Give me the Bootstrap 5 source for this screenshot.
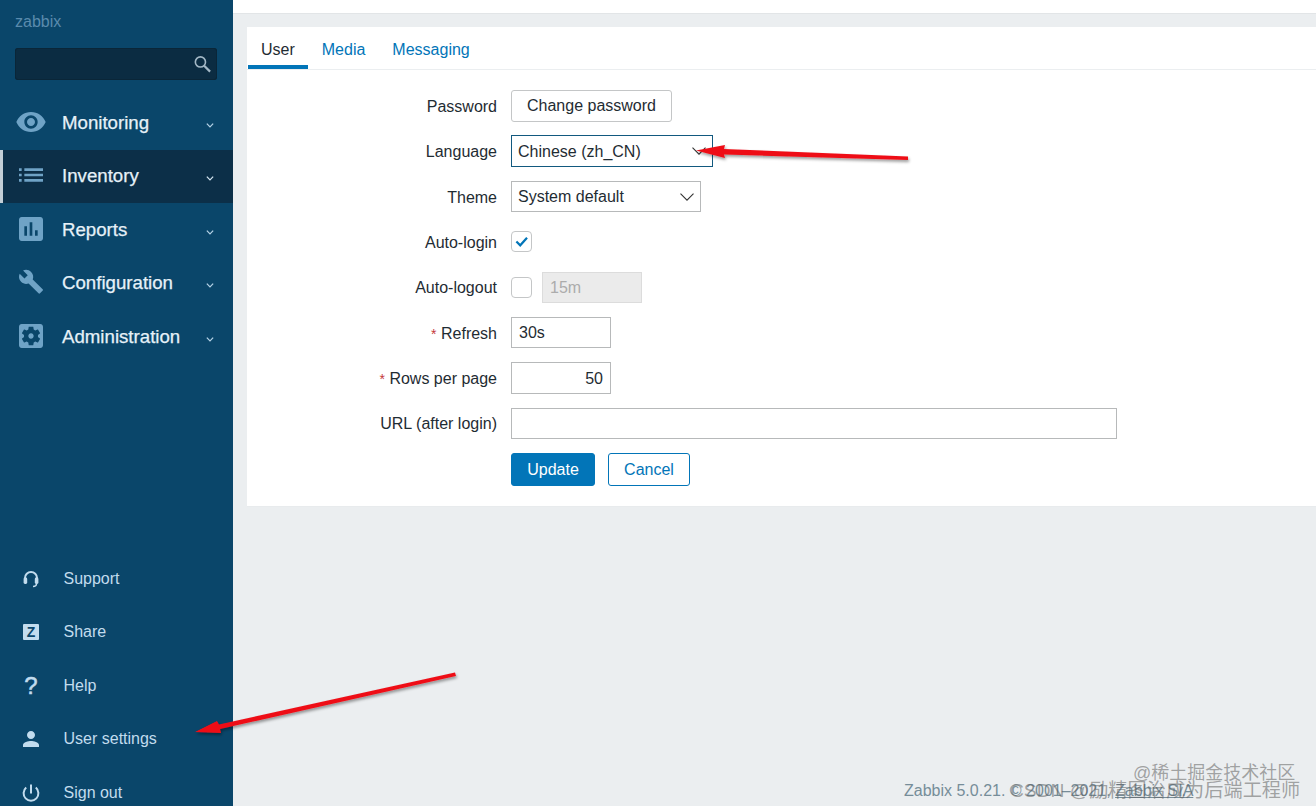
<!DOCTYPE html>
<html lang="en">
<head>
    <meta charset="UTF-8">
    <title>User settings</title>
    <link href="https://cdn.jsdelivr.net/npm/bootstrap@5.3.0/dist/css/bootstrap.min.css" rel="stylesheet">
    <style>
        html, body { height: 100%; }
        body {
            font-family: "Liberation Sans", Arial, sans-serif;
            font-size: 16px;
            color: #1f2c33;
            background: #ebeef0;
            overflow: hidden;
        }
        .shell { height: 806px; width: 1316px; }

        /* sidebar */
        .side {
            width: 233px;
            flex: 0 0 233px;
            height: 806px;
            background: #0a466a;
            overflow: hidden;
        }
        .brand { padding: 13px 15px 0; height: 48px; color: #5a8bad; line-height: 18px; }
        .search-box {
            margin: 0 16px 0 15px;
            height: 32px;
            background: #0b2c42;
            border-radius: 3px;
            box-shadow: inset 0 0 0 1px #0a2638;
        }
        .search-box input {
            background: transparent;
            border: 0;
            outline: 0;
            min-width: 0;
            color: #fff;
        }
        .search-box svg { margin-right: 6px; }
        .menu-main { margin-top: 16px; }
        .menu-link {
            height: 53.5px;
            padding: 0 0 0 15px;
            gap: 15px;
            font-size: 18.67px;
            color: #e6f1f8;
            -webkit-text-stroke: .25px #e6f1f8;
        }
        .menu-link:hover, .menu-link:focus { color: #fff; }
        .menu-link svg.ico { width: 32px; height: 32px; fill: #6fa3c6; flex: 0 0 32px; margin-top: -2px; }
        .menu-link.current {
            background: #0c2f48;
            box-shadow: inset 3px 0 0 #c3ced6;
        }
        .menu-link .caret-mark { margin-left: auto; margin-right: 19px; margin-top: 5px; }
        .menu-foot { margin-top: auto; margin-bottom: -13.5px; }
        .foot-link {
            height: 53.5px;
            padding: 0 0 0 19px;
            gap: 20.5px;
            color: #c2dcee;
        }
        .foot-link:hover, .foot-link:focus { color: #fff; }
        .foot-icon {
            width: 24px;
            height: 24px;
            flex: 0 0 24px;
            color: #c2dcee;
            font-weight: 700;
        }
        .foot-icon svg { width: 24px; height: 24px; }
        .z-box {
            width: 16px;
            height: 16px;
            background: #c2dcee;
            color: #0a466a;
            font-size: 14px;
            line-height: 16px;
            border-radius: 1px;
        }
        .help-mark { font-size: 24px; font-weight: 400; line-height: 24px; -webkit-text-stroke: .5px #c2dcee; }

        /* content */
        .top-strip { height: 14px; background: #fff; border-bottom: 1px solid #e2e5e7; }
        .panel {
            margin: 13px 0 0 14px;
            height: 480px;
            background: #fff;
            border-bottom: 1px solid #e8ebed;
        }
        .tab-row { height: 43px; border-bottom: 1px solid #ebeef0; padding-left: 1px; }
        .tab-row .nav-link {
            height: 42px;
            padding: 13px 13px 0;
            color: #0275b8;
            line-height: 19px;
        }
        .tab-row .tab-gap { margin-left: 1px; }
        .tab-row .nav-link.active {
            color: #1f2c33;
            box-shadow: inset 0 -4px 0 #0275b8;
        }
        .form-area {
            display: grid;
            grid-template-columns: 250px 1fr;
            column-gap: 14px;
            row-gap: 13.9px;
            grid-auto-rows: 31.5px;
            padding-top: 20px;
        }
        .field-label { text-align: right; align-self: center; margin: 0; padding-top: 2px; }
        .req { color: #c4383a; font-size: 14px; }
        .ctl, .ctl:focus {
            border: 1px solid #b7b9ba;
            border-radius: 0;
            height: 31.5px;
            min-height: 0;
            padding: 1px 7px 0;
            font-size: 16px;
            color: #1f2c33;
            box-shadow: none;
        }
        .ctl-100 { width: 100px; }
        .ctl-606 { width: 606px; }
        .ctl.ctl-off { width: 100px; margin-left: 2px; background: #ebebeb; color: #acacac; border-color: #dcdcdc; opacity: 1; }
        .pick {
            padding: 1px 30px 0 6px;
            background-position: right 6px center;
            background-size: 14px 8px;
            background-image: url("data:image/svg+xml,%3csvg xmlns='http://www.w3.org/2000/svg' viewBox='0 0 14 8'%3e%3cpath fill='none' stroke='%23333' stroke-width='1.1' d='M.5.7 7 7.2 13.5.7'/%3e%3c/svg%3e");
        }
        .pick-lang, .pick-lang:focus { width: 202px; border-color: #12597f; }
        .pick-theme { width: 190px; }
        .tick {
            width: 21px;
            height: 21px;
            margin: 0;
            border: 1px solid #c4c6c7;
            border-radius: 3px;
            background-size: 17px;
        }
        .tick:checked, .tick:checked:focus {
            background-color: #fff;
            border-color: #c4c6c7;
            box-shadow: none;
            background-image: url("data:image/svg+xml,%3csvg xmlns='http://www.w3.org/2000/svg' viewBox='0 0 20 20'%3e%3cpath fill='none' stroke='%230275b8' stroke-width='2.6' d='M4 10l4.5 4.5L16.5 5.5'/%3e%3c/svg%3e");
        }
        .btn-plain {
            --bs-btn-padding-x: 15px;
            --bs-btn-padding-y: 0;
            --bs-btn-font-size: 16px;
            --bs-btn-border-radius: 3px;
            --bs-btn-color: #1f2c33;
            --bs-btn-border-color: #c4c6c7;
            --bs-btn-hover-border-color: #c4c6c7;
            height: 32px;
            width: 161px;
        }
        .btn-update, .btn-cancel {
            --bs-btn-padding-x: 0;
            --bs-btn-padding-y: 0;
            --bs-btn-font-size: 16px;
            --bs-btn-border-radius: 3px;
            height: 33px;
        }
        .btn-update {
            --bs-btn-bg: #0275b8;
            --bs-btn-border-color: #0275b8;
            --bs-btn-color: #fff;
            width: 84px;
        }
        .btn-cancel {
            --bs-btn-border-color: #0275b8;
            --bs-btn-color: #0275b8;
            width: 82px;
        }
        .actions-cell { gap: 13px; }
        .page-foot {
            margin-top: auto;
            padding: 0 0 6px 671px;
            color: #768d99;
            line-height: 18px;
        }
        .page-foot a { color: #768d99; }

        /* things lying over the page */
        .arrows { position: absolute; left: 0; top: 0; pointer-events: none; }
        .mark-a, .mark-b {
            position: absolute;
            color: rgba(95, 95, 95, .55);
            white-space: nowrap;
            font-family: "Liberation Sans", "Noto Sans CJK SC", sans-serif;
            line-height: 20px;
        }
        .mark-a { left: 1010px; top: 781px; font-size: 19.2px; }
        .mark-b { left: 1133px; top: 763px; font-size: 18px; }
    </style>
</head>
<body>
<div class="shell d-flex position-relative">
    <!-- left menu -->
    <aside class="side d-flex flex-column">
        <div class="brand">zabbix</div>
        <div class="search-box d-flex align-items-center">
            <input type="text" class="flex-grow-1" aria-label="Search">
            <svg width="20" height="20" viewBox="0 0 20 20" fill="none" stroke="#a3b8c6" stroke-width="1.9"><circle cx="7.6" cy="7.6" r="6"/><path d="M12 12l7 7" stroke-width="2.6"/></svg>
        </div>
        <nav class="nav flex-column menu-main">
            <a class="nav-link menu-link d-flex align-items-center" href="#">
                <svg class="ico" viewBox="0 0 24 24"><path d="M12 4.5C7 4.5 2.73 7.61 1 12c1.73 4.39 6 7.5 11 7.5s9.27-3.11 11-7.5c-1.73-4.39-6-7.5-11-7.5zM12 17c-2.76 0-5-2.24-5-5s2.24-5 5-5 5 2.24 5 5-2.24 5-5 5zm0-8c-1.66 0-3 1.34-3 3s1.34 3 3 3 3-1.34 3-3-1.34-3-3-3z"/></svg>
                Monitoring
                <svg class="caret-mark" width="8" height="5" viewBox="0 0 9 6" fill="none" stroke="#b5d2e6" stroke-width="1.5"><path d="M.7.8l3.8 3.8L8.3.8"/></svg>
            </a>
            <a class="nav-link menu-link current d-flex align-items-center" href="#">
                <svg class="ico" viewBox="0 0 24 24"><path d="M3 13h2v-2H3v2zm0 4h2v-2H3v2zm0-8h2V7H3v2zm4 4h14v-2H7v2zm0 4h14v-2H7v2zM7 7v2h14V7H7z"/></svg>
                Inventory
                <svg class="caret-mark" width="8" height="5" viewBox="0 0 9 6" fill="none" stroke="#d5e6f1" stroke-width="1.5"><path d="M.7.8l3.8 3.8L8.3.8"/></svg>
            </a>
            <a class="nav-link menu-link d-flex align-items-center" href="#">
                <svg class="ico" viewBox="0 0 24 24"><path d="M19 3H5c-1.1 0-2 .9-2 2v14c0 1.1.9 2 2 2h14c1.1 0 2-.9 2-2V5c0-1.1-.9-2-2-2zM9 17H7v-7h2v7zm4 0h-2V7h2v10zm4 0h-2v-4h2v4z"/></svg>
                Reports
                <svg class="caret-mark" width="8" height="5" viewBox="0 0 9 6" fill="none" stroke="#b5d2e6" stroke-width="1.5"><path d="M.7.8l3.8 3.8L8.3.8"/></svg>
            </a>
            <a class="nav-link menu-link d-flex align-items-center" href="#">
                <svg class="ico" viewBox="-2.7 -2.4 29.4 29.4"><path d="M22.7 19l-9.1-9.1c.9-2.3.4-5-1.5-6.9-2-2-5-2.4-7.4-1.3L9 6 6 9 1.6 4.7C.4 7.1.9 10.1 2.9 12.1c1.9 1.9 4.6 2.4 6.9 1.5l9.1 9.1c.4.4 1 .4 1.4 0l2.3-2.3c.5-.4.5-1.1.1-1.4z"/></svg>
                Configuration
                <svg class="caret-mark" width="8" height="5" viewBox="0 0 9 6" fill="none" stroke="#b5d2e6" stroke-width="1.5"><path d="M.7.8l3.8 3.8L8.3.8"/></svg>
            </a>
            <a class="nav-link menu-link d-flex align-items-center" href="#">
                <svg class="ico" viewBox="0 0 24 24"><path d="M12 10c-1.1 0-2 .9-2 2s.9 2 2 2 2-.9 2-2-.9-2-2-2zm7-7H5c-1.11 0-2 .9-2 2v14c0 1.1.89 2 2 2h14c1.11 0 2-.9 2-2V5c0-1.1-.89-2-2-2zm-1.75 9c0 .23-.02.46-.05.68l1.48 1.16c.13.11.17.3.08.45l-1.4 2.42c-.09.15-.27.21-.43.15l-1.74-.7c-.36.28-.76.51-1.18.69l-.26 1.85c-.03.17-.18.3-.35.3h-2.8c-.17 0-.32-.13-.35-.29l-.26-1.85c-.43-.18-.82-.41-1.18-.69l-1.74.7c-.16.06-.34 0-.43-.15l-1.4-2.42c-.09-.15-.05-.34.08-.45l1.48-1.16c-.03-.23-.05-.46-.05-.69 0-.23.02-.46.05-.68l-1.48-1.16c-.13-.11-.17-.3-.08-.45l1.4-2.42c.09-.15.27-.21.43-.15l1.74.7c.36-.28.76-.51 1.18-.69l.26-1.85c.03-.17.18-.3.35-.3h2.8c.17 0 .32.13.35.29l.26 1.85c.43.18.82.41 1.18.69l1.74-.7c.16-.06.34 0 .43.15l1.4 2.42c.09.15.05.34-.08.45l-1.48 1.16c.03.23.05.46.05.69z"/></svg>
                Administration
                <svg class="caret-mark" width="8" height="5" viewBox="0 0 9 6" fill="none" stroke="#b5d2e6" stroke-width="1.5"><path d="M.7.8l3.8 3.8L8.3.8"/></svg>
            </a>
        </nav>
        <nav class="nav flex-column menu-foot">
            <a class="nav-link foot-link d-flex align-items-center" href="#">
                <span class="foot-icon d-flex align-items-center justify-content-center">
                    <svg viewBox="0 0 24 24" fill="none" stroke="currentColor" stroke-width="2"><path d="M6 13v-2a6 6 0 0 1 12 0v2"/><rect x="4.6" y="10.5" width="3.6" height="6.5" rx="1.4" fill="currentColor" stroke="none"/><rect x="15.8" y="10.5" width="3.6" height="6.5" rx="1.4" fill="currentColor" stroke="none"/><path d="M17.5 16.5c0 2-1.6 3-3.5 3" stroke-width="1.5"/></svg>
                </span>
                Support
            </a>
            <a class="nav-link foot-link d-flex align-items-center" href="#">
                <span class="foot-icon d-flex align-items-center justify-content-center"><span class="z-box text-center">Z</span></span>
                Share
            </a>
            <a class="nav-link foot-link d-flex align-items-center" href="#">
                <span class="foot-icon d-flex align-items-center justify-content-center"><span class="help-mark">?</span></span>
                Help
            </a>
            <a class="nav-link foot-link d-flex align-items-center" href="#">
                <span class="foot-icon d-flex align-items-center justify-content-center">
                    <svg viewBox="0 0 24 24" fill="currentColor"><path d="M12 12c2.21 0 4-1.79 4-4s-1.79-4-4-4-4 1.79-4 4 1.79 4 4 4zm0 2c-2.67 0-8 1.34-8 4v2h16v-2c0-2.66-5.33-4-8-4z"/></svg>
                </span>
                User settings
            </a>
            <a class="nav-link foot-link d-flex align-items-center" href="#">
                <span class="foot-icon d-flex align-items-center justify-content-center">
                    <svg viewBox="0 0 24 24" fill="none" stroke="currentColor" stroke-width="2"><path d="M12 3.5v9"/><path d="M7.2 6.6a7.4 7.4 0 1 0 9.6 0"/></svg>
                </span>
                Sign out
            </a>
        </nav>
    </aside>

    <!-- content -->
    <main class="flex-grow-1 d-flex flex-column">
        <div class="top-strip"></div>
        <section class="panel">
            <ul class="nav tab-row">
                <li class="nav-item"><a class="nav-link active" href="#">User</a></li>
                <li class="nav-item tab-gap"><a class="nav-link" href="#">Media</a></li>
                <li class="nav-item tab-gap"><a class="nav-link" href="#">Messaging</a></li>
            </ul>
            <form class="form-area">
                <label class="field-label">Password</label>
                <div><button type="button" class="btn btn-plain">Change password</button></div>

                <label class="field-label">Language</label>
                <div><select class="form-select ctl pick pick-lang"><option>Chinese (zh_CN)</option></select></div>

                <label class="field-label">Theme</label>
                <div><select class="form-select ctl pick pick-theme"><option>System default</option></select></div>

                <label class="field-label">Auto-login</label>
                <div class="d-flex align-items-center"><input class="form-check-input tick" type="checkbox" checked></div>

                <label class="field-label">Auto-logout</label>
                <div class="d-flex align-items-center gap-2">
                    <input class="form-check-input tick" type="checkbox">
                    <input class="form-control ctl ctl-off" value="15m" disabled>
                </div>

                <label class="field-label"><span class="req">*</span> Refresh</label>
                <div><input class="form-control ctl ctl-100" value="30s"></div>

                <label class="field-label"><span class="req">*</span> Rows per page</label>
                <div><input class="form-control ctl ctl-100 text-end" value="50"></div>

                <label class="field-label">URL (after login)</label>
                <div><input class="form-control ctl ctl-606"></div>

                <div></div>
                <div class="d-flex actions-cell">
                    <button type="button" class="btn btn-update">Update</button>
                    <button type="button" class="btn btn-cancel">Cancel</button>
                </div>
            </form>
        </section>
        <footer class="page-foot">Zabbix 5.0.21. © 2001–2021, <a href="#">Zabbix SIA</a></footer>
    </main>

    <!-- red annotation arrows and watermarks on top of the screenshot -->
    <svg class="arrows" width="1316" height="806" viewBox="0 0 1316 806">
        <defs>
            <filter id="arrowShade" x="-10%" y="-60%" width="120%" height="220%">
                <feDropShadow dx="1" dy="2" stdDeviation="1.5" flood-color="#000" flood-opacity=".4"/>
            </filter>
        </defs>
        <path filter="url(#arrowShade)" fill="#ee0f18" d="M696 150.5 L725 145 L724 149 L908 156.5 L908 160 L724 154.5 L725 158 Z"/>
        <path filter="url(#arrowShade)" fill="#ee0f18" d="M195 732 L217 721 L219 724.5 L455 672.5 L456 676 L220 729 L221 733 Z"/>
    </svg>
    <div class="mark-a">CSDN @励精图治成为后端工程师</div>
    <div class="mark-b">@稀土掘金技术社区</div>
</div>

<script src="https://cdn.jsdelivr.net/npm/bootstrap@5.3.0/dist/js/bootstrap.bundle.min.js"></script>
</body>
</html>
